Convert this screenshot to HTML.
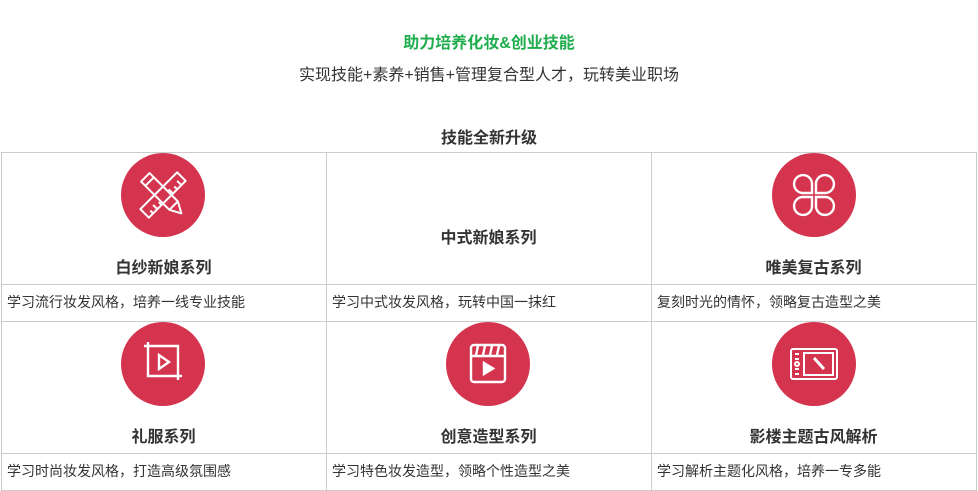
<!DOCTYPE html>
<html><head><meta charset="utf-8"><style>
*{margin:0;padding:0;box-sizing:border-box}
body{width:978px;height:491px;background:#fff;font-family:"Liberation Sans","Noto Sans CJK SC",sans-serif;color:#333;position:relative;overflow:hidden}
.a{position:absolute}
.c{text-align:center;white-space:nowrap}
.t{font-weight:bold;font-size:16px;color:#333}
.d{font-size:14px;color:#333;white-space:nowrap}
.ci{position:absolute;width:84px;height:84px;border-radius:50%;background:#d4344e}
.ci svg{position:absolute;left:0;top:0}
.hl{position:absolute;height:1px;background:#ccc;left:1px;width:976px}
.vl{position:absolute;width:1px;background:#ccc}
</style></head><body>
<div class="a c" style="left:0;width:978px;top:29px;font-size:16px;font-weight:bold;color:#1fad4e">助力培养化妆&amp;创业技能</div>
<div class="a c" style="left:0;width:978px;top:61px;font-size:16px;color:#333">实现技能+素养+销售+管理复合型人才，玩转美业职场</div>
<div class="a c" style="left:0;width:978px;top:124px;font-size:16px;font-weight:bold;color:#333">技能全新升级</div>

<div class="hl" style="top:152px"></div>
<div class="hl" style="top:284px"></div>
<div class="hl" style="top:321px"></div>
<div class="hl" style="top:453px"></div>
<div class="hl" style="top:490px"></div>
<div class="vl" style="left:1px;top:152px;height:339px"></div>
<div class="vl" style="left:326px;top:152px;height:339px"></div>
<div class="vl" style="left:651px;top:152px;height:339px"></div>
<div class="vl" style="left:976px;top:152px;height:339px"></div>

<div class="ci" style="left:121px;top:153px"><svg width="84" height="84" fill="none" stroke="#fff" stroke-width="2" stroke-linejoin="round">
<g transform="rotate(45 42 42)"><rect x="36" y="16" width="12" height="52"/><line x1="42" y1="22" x2="48" y2="22"/><line x1="44" y1="28" x2="48" y2="28"/><line x1="42" y1="34" x2="48" y2="34"/><line x1="44" y1="50" x2="48" y2="50"/><line x1="42" y1="56" x2="48" y2="56"/><line x1="44" y1="62" x2="48" y2="62"/></g>
<g transform="rotate(-45 42 42)"><path d="M36 17h12v40l-6 11-6-11z"/><line x1="36" y1="23" x2="48" y2="23"/><line x1="36" y1="57" x2="48" y2="57"/></g></svg></div>

<div class="ci" style="left:772px;top:153px"><svg width="84" height="84" fill="none" stroke="#fff" stroke-width="2.4">
<path d="M40 40h-10a9 9 0 1 1 10-10z"/><path d="M44 40h10a9 9 0 1 0-10-10z"/><path d="M40 44h-10a9 9 0 1 0 10 10z"/><path d="M44 44h10a9 9 0 1 1-10 10z"/></svg></div>

<div class="ci" style="left:121px;top:322px"><svg width="84" height="84" fill="none" stroke="#fff" stroke-width="2.4">
<path d="M23 24h34v34"/><path d="M27 20v34h34"/><path d="M38 33v14l10-7z"/></svg></div>

<div class="ci" style="left:446px;top:322px"><svg width="84" height="84" fill="none" stroke="#fff" stroke-width="2.4">
<rect x="25" y="23" width="34" height="37" rx="3"/><line x1="25" y1="34" x2="59" y2="34"/><line x1="32" y1="24" x2="30" y2="33"/><line x1="39" y1="24" x2="37" y2="33"/><line x1="46" y1="24" x2="44" y2="33"/><line x1="53" y1="24" x2="51" y2="33"/><path d="M38 41v11l9-5.5z" fill="#fff"/></svg></div>

<div class="ci" style="left:772px;top:322px"><svg width="84" height="84" fill="none" stroke="#fff" stroke-width="2">
<rect x="19" y="27" width="46" height="30" rx="2"/><rect x="32" y="31" width="29" height="22"/><line x1="23" y1="32" x2="27" y2="32"/><circle cx="25" cy="42" r="2"/><line x1="23" y1="37" x2="27" y2="37"/><line x1="23" y1="47" x2="27" y2="47"/><line x1="23" y1="52" x2="27" y2="52"/><line x1="42" y1="36" x2="52" y2="47" stroke-width="3"/></svg></div>

<div class="a c t" style="left:1px;width:325px;top:254px">白纱新娘系列</div>
<div class="a c t" style="left:326px;width:325px;top:224px">中式新娘系列</div>
<div class="a c t" style="left:651px;width:325px;top:254px">唯美复古系列</div>
<div class="a c t" style="left:1px;width:325px;top:423px">礼服系列</div>
<div class="a c t" style="left:326px;width:325px;top:423px">创意造型系列</div>
<div class="a c t" style="left:651px;width:325px;top:423px">影楼主题古风解析</div>

<div class="a d" style="left:7px;top:292px">学习流行妆发风格，培养一线专业技能</div>
<div class="a d" style="left:332px;top:292px">学习中式妆发风格，玩转中国一抹红</div>
<div class="a d" style="left:657px;top:292px">复刻时光的情怀，领略复古造型之美</div>
<div class="a d" style="left:7px;top:461px">学习时尚妆发风格，打造高级氛围感</div>
<div class="a d" style="left:332px;top:461px">学习特色妆发造型，领略个性造型之美</div>
<div class="a d" style="left:657px;top:461px">学习解析主题化风格，培养一专多能</div>
</body></html>
